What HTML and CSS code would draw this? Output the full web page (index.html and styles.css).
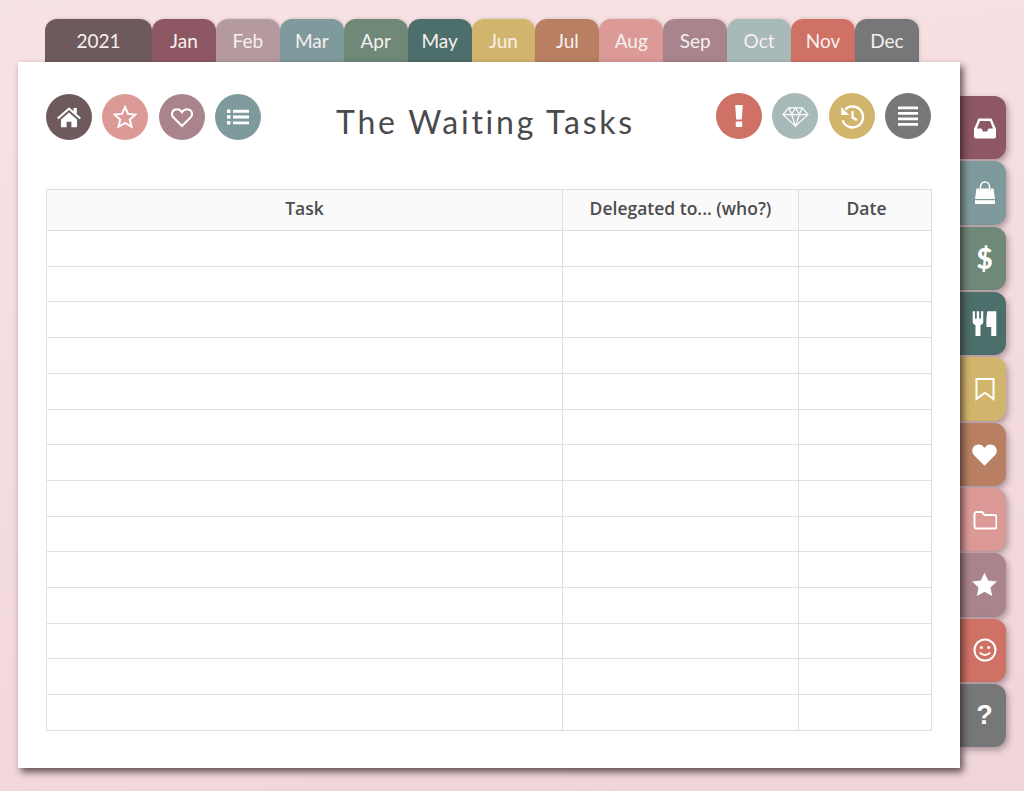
FILE: index.html
```html
<!DOCTYPE html>
<html lang="en">
<head>
<meta charset="utf-8">
<title>The Waiting Tasks</title>
<link rel="stylesheet" href="styles.css">
</head>
<body>
<div class="planner">
  <nav class="months">
    <a class="tab tab-year c-cocoa">2021</a>
    <a class="tab c-wine">Jan</a>
    <a class="tab c-mauve">Feb</a>
    <a class="tab c-teal">Mar</a>
    <a class="tab c-sage">Apr</a>
    <a class="tab c-pine">May</a>
    <a class="tab c-gold">Jun</a>
    <a class="tab c-clay">Jul</a>
    <a class="tab c-rose">Aug</a>
    <a class="tab c-dusk">Sep</a>
    <a class="tab c-mist">Oct</a>
    <a class="tab c-coral">Nov</a>
    <a class="tab c-slate">Dec</a>
  </nav>
  <div class="body-row">
    <main class="sheet">
      <header class="sheet-head">
        <div class="circles circles-left">
          <span class="circle c-cocoa"><svg class="ic ic-md" viewBox="0 0 24 24"><path class="fill" d="M1 12.600 12 3l4.200 3.700V3.600h3v5.700l3.800 3.300-1.300 1.500L12 5.600 2.300 14.100Z"/><path class="fill" d="M4.600 14.300 12 7.800l7.400 6.500v7.200h-5.200v-5.200H9.800v5.200H4.600Z"/></svg></span>
          <span class="circle c-rose"><svg class="ic" viewBox="0 0 24 24"><path class="line" d="m12 2 3 6.900 7.400.7-5.600 4.900 1.700 7.300L12 18l-6.500 3.800 1.700-7.300-5.600-4.900L9 8.900Z"/></svg></span>
          <span class="circle c-dusk"><svg class="ic" viewBox="0 0 24 24"><path class="line" d="M12 21 3.300 12.300C.8 9.600 1.800 4.500 6.800 4.200 9.200 4 11 5.500 12 7.200 13 5.500 14.800 4 17.200 4.200c5 .3 6 5.400 3.500 8.100Z"/></svg></span>
          <span class="circle c-teal"><svg class="ic" viewBox="0 0 24 24"><path class="fill" d="M1 4.500h3.500V8H1ZM7 4.800h16v2.900H7ZM1 10.300h3.500v3.500H1ZM7 10.600h16v2.900H7ZM1 16.100h3.500v3.500H1ZM7 16.400h16v2.900H7Z"/></svg></span>
        </div>
        <h1 class="title">The Waiting Tasks</h1>
        <div class="circles circles-right">
          <span class="circle c-coral"><svg class="ic" viewBox="0 0 24 24"><path class="fill" d="M8.200 1h7.600l-1 14.500H9.200ZM8.800 17.500h6.400V23H8.800Z"/></svg></span>
          <span class="circle c-mist"><svg class="ic ic-lg" viewBox="0 0 28 24"><path class="line thin" d="M7 3h14l6 7-13 12L1 10Zm-6 7h26M10 10l4 12 4-12-4-7-4 7ZM7 3l3 7M21 3l-3 7"/></svg></span>
          <span class="circle c-gold"><svg class="ic ic-md" viewBox="0 0 24 24"><path class="line mid" d="M5.800 5.800A9.700 9.700 0 1 1 3.300 16"/><path class="fill" d="M2 3.800 9.300 11H2Z"/><path class="line mid" d="M12.500 7.500v5.800l4 2.500"/></svg></span>
          <span class="circle c-slate"><svg class="ic" viewBox="0 0 24 24"><path class="fill" d="M2 2.500h20v2.700H2ZM2 8h20v2.700H2ZM2 13.500h20v2.700H2ZM2 19h20v2.700H2Z"/></svg></span>
        </div>
      </header>
      <table class="tasks">
        <colgroup><col class="col-task"><col class="col-who"><col class="col-date"></colgroup>
        <thead><tr><th>Task</th><th>Delegated to... (who?)</th><th class="th-date">Date</th></tr></thead>
        <tbody>
          <tr><td></td><td></td><td></td></tr>
          <tr><td></td><td></td><td></td></tr>
          <tr><td></td><td></td><td></td></tr>
          <tr><td></td><td></td><td></td></tr>
          <tr><td></td><td></td><td></td></tr>
          <tr><td></td><td></td><td></td></tr>
          <tr><td></td><td></td><td></td></tr>
          <tr><td></td><td></td><td></td></tr>
          <tr><td></td><td></td><td></td></tr>
          <tr><td></td><td></td><td></td></tr>
          <tr><td></td><td></td><td></td></tr>
          <tr><td></td><td></td><td></td></tr>
          <tr><td></td><td></td><td></td></tr>
          <tr><td></td><td></td><td></td></tr>
        </tbody>
      </table>
    </main>
    <aside class="side">
      <a class="side-tab c-wine"><svg class="ic" viewBox="0 0 24 24"><path class="fill" fill-rule="evenodd" d="M5.500 2.500h13L23 13v7.500a2 2 0 0 1-2 2H3a2 2 0 0 1-2-2V13ZM7 5 4 12.500h4.500l1.500 3h4l1.500-3H20L17 5Z"/></svg></a>
      <a class="side-tab c-teal"><svg class="ic" viewBox="0 0 24 24"><path class="line thinish" d="M7.500 10V5.500a4.500 4.500 0 0 1 9 0V10"/><path class="fill" d="M3.500 7.500h3v2h1.800v-2h7.400v2h1.800v-2h3L22 18H2ZM2 19.300h20V23H2Z"/></svg></a>
      <a class="side-tab c-sage"><span class="glyph glyph-dollar">$</span></a>
      <a class="side-tab c-pine"><svg class="ic ic-lg" viewBox="0 0 24 24"><path class="fill" d="M1.500 1h2v6.500h1.600V1h2.200v6.500h1.600V1h2v9.500c0 1.500-1 2.500-2.500 3V23H4v-9.500c-1.500-.5-2.500-1.500-2.500-3ZM14.500 1H22.500V23h-4.500v-8h-4.200c-.4-4.500 0-10 .7-14Z"/></svg></a>
      <a class="side-tab c-gold"><svg class="ic" viewBox="0 0 24 24"><path class="line" d="M3.500 2h17v20L12 15.800 3.500 22Z"/></svg></a>
      <a class="side-tab c-clay"><svg class="ic ic-lg" viewBox="0 0 24 24"><path class="fill" d="M12 22 2.500 12.500C-.3 9.300 1.200 3.500 6.500 3.200 9 3 11 4.500 12 6.300 13 4.500 15 3 17.500 3.200c5.300.3 6.800 6.100 4 9.300Z"/></svg></a>
      <a class="side-tab c-rose"><svg class="ic" viewBox="0 0 24 24"><path class="line" d="M1.500 6a2 2 0 0 1 2-2h5.500l2.500 3h10a2 2 0 0 1 2 2v9.500a2 2 0 0 1-2 2h-18a2 2 0 0 1-2-2Z"/></svg></a>
      <a class="side-tab c-dusk"><svg class="ic ic-lg" viewBox="0 0 24 24"><path class="fill" d="m12 1.500 3.300 7 7.700.9-5.700 5.300 1.500 7.600L12 18.500l-6.800 3.800 1.500-7.600L1 9.400l7.700-.9Z"/></svg></a>
      <a class="side-tab c-coral"><svg class="ic" viewBox="0 0 24 24"><circle class="line" cx="12" cy="12" r="10.500"/><circle class="fill" cx="8.300" cy="9.500" r="1.500"/><circle class="fill" cx="15.700" cy="9.500" r="1.500"/><path class="line" d="M6.800 14.500c2.600 3.300 7.800 3.300 10.400 0"/></svg></a>
      <a class="side-tab c-slate"><span class="glyph glyph-help">?</span></a>
    </aside>
  </div>
</div>
</body>
</html>
```

FILE: styles.css
```css
* { box-sizing: border-box; }

html, body { margin: 0; height: 100%; }

body {
  overflow: hidden;
  background: linear-gradient(170deg, #f8e3e4 0%, #f5dcdf 45%, #efd5da 100%);
  font-family: Lato, "Open Sans", sans-serif;
}

.planner { padding: 19px 0 0 18px; }

.c-cocoa { background: #6e5a5c; }
.c-wine  { background: #8d5763; }
.c-mauve { background: #b59a9f; }
.c-teal  { background: #7f9a9c; }
.c-sage  { background: #6f8878; }
.c-pine  { background: #4d6f6c; }
.c-gold  { background: #d2b56c; }
.c-clay  { background: #b87f62; }
.c-rose  { background: #db9a96; }
.c-dusk  { background: #a9848c; }
.c-mist  { background: #a8b9ba; }
.c-coral { background: #cf7165; }
.c-slate { background: #757779; }

/* month tabs */
.months {
  display: flex;
  margin-left: 27px;
  height: 43px;
}

.tab {
  width: 63.92px;
  display: flex;
  align-items: center;
  justify-content: center;
  padding-bottom: 1px;
  border-radius: 12px 12px 0 0;
  box-shadow: 1px -1px 3px rgba(90, 60, 65, .16);
  color: #f7f0ef;
  font-size: 19px;
}

.tab-year { width: 107px; }

/* sheet + side tabs */
.body-row { display: flex; align-items: flex-start; }

.sheet {
  position: relative;
  z-index: 2;
  flex: none;
  width: 942px;
  height: 706px;
  padding: 31px 29px 0 28px;
  background: #fff;
  box-shadow: 3px 4px 7px rgba(40, 25, 28, .72);
}

.sheet-head {
  display: flex;
  justify-content: space-between;
  height: 46px;
  margin-bottom: 50px;
}

.circles { display: flex; gap: 10.3px; }
.circles-left { margin-top: 1px; }

.circle {
  width: 46px;
  height: 46px;
  border-radius: 50%;
  display: flex;
  align-items: center;
  justify-content: center;
  color: #fff;
}

.title {
  margin: 6px 0 0 -6px;
  color: #4a4a4d;
  font-size: 32px;
  font-weight: 400;
  line-height: 46px;
  letter-spacing: 2.75px;
  white-space: nowrap;
}

/* icons */
.ic { width: 24px; height: 24px; display: block; }
.ic-md { width: 26px; height: 26px; }
.ic-lg { width: 27px; height: 27px; }
.fill { fill: #fff; }
.line { fill: none; stroke: #fff; stroke-width: 2; }
.thin { stroke-width: 1.2; }
.thinish { stroke-width: 1.5; }
.mid { stroke-width: 2.2; }

.glyph { color: #fff; font-family: "Liberation Sans", sans-serif; font-weight: 700; line-height: 1; }
.glyph-dollar { font-family: Lato, sans-serif; font-weight: 900; font-size: 28px; }
.glyph-help { font-size: 27px; }

/* table */
.tasks {
  width: 885px;
  height: 542px;
  table-layout: fixed;
  border-collapse: collapse;
}

.col-task { width: 516px; }
.col-who  { width: 236px; }
.col-date { width: 133px; }

.tasks th, .tasks td { padding: 0; border: 1px solid #e0e0e1; }

.tasks thead tr { height: 41px; }

.tasks th {
  padding-bottom: 5px;
  background: #fafafa;
  color: #4c4c4f;
  font-family: "Open Sans", sans-serif;
  font-size: 17.5px;
  font-weight: 600;
}

.tasks .th-date { padding-left: 3px; }

/* side tabs */
.side {
  display: flex;
  flex-direction: column;
  gap: 2px;
  margin-top: 34px;
}

.side-tab {
  width: 46px;
  height: 63.330px;
  padding-left: 3px;
  display: flex;
  align-items: center;
  justify-content: center;
  border-radius: 0 12px 12px 0;
  box-shadow: 2px 3px 6px rgba(60, 40, 45, .4);
}
```
